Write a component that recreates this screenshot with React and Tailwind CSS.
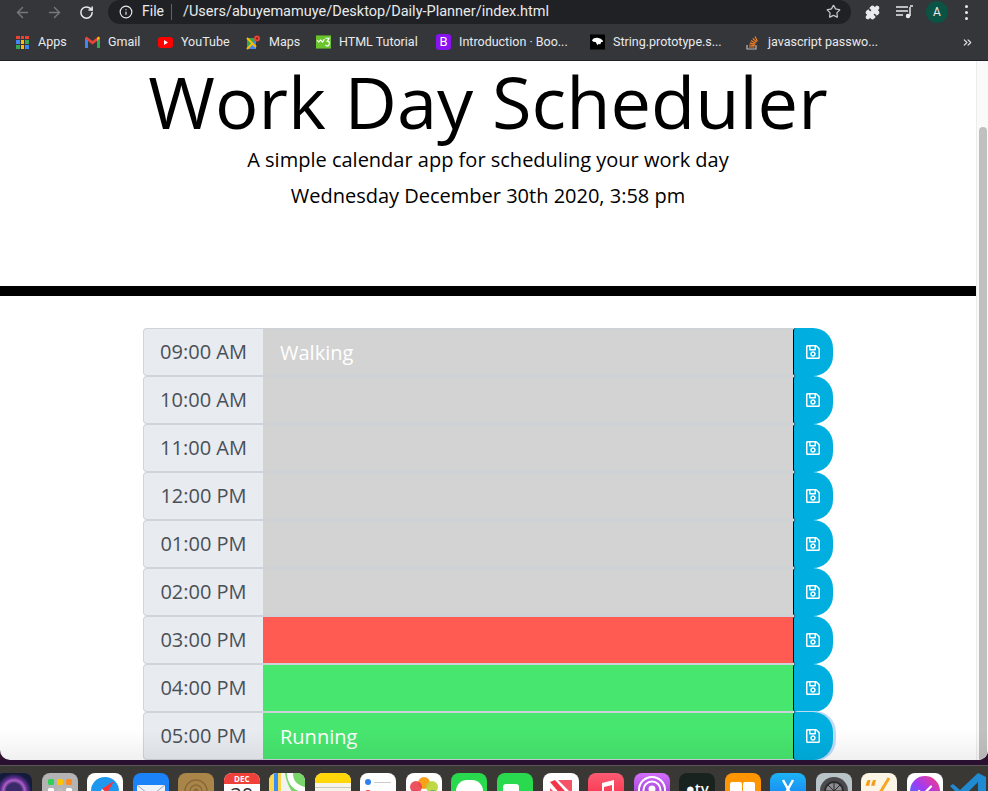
import React from "react";
import { ArrowLeft, ArrowRight, RotateCw, Info, Star, Puzzle, ChevronsRight, Check } from "lucide-react";
import { FaRegSave } from "react-icons/fa";

const rows = [
  ["09:00 AM", "Walking", "bg-[#d3d3d3]"],
  ["10:00 AM", "", "bg-[#d3d3d3]"],
  ["11:00 AM", "", "bg-[#d3d3d3]"],
  ["12:00 PM", "", "bg-[#d3d3d3]"],
  ["01:00 PM", "", "bg-[#d3d3d3]"],
  ["02:00 PM", "", "bg-[#d3d3d3]"],
  ["03:00 PM", "", "bg-[#ff5b52]"],
  ["04:00 PM", "", "bg-[#47e66f]"],
  ["05:00 PM", "Running", "bg-[#47e66f]"],
];

function AppsIcon() {
  const c = ["#ea4335","#ea4335","#ea4335","#4285f4","#fbbc04","#34a853","#34a853","#fbbc04","#4285f4"];
  return <div className="grid grid-cols-3 gap-px w-[13px] h-[13px]">{c.map((x, i) => <span key={i} style={{ background: x }} />)}</div>;
}
const GmailIcon = () => (
  <svg width="15" height="12" viewBox="0 0 15 12"><path d="M0 2v10h3V5l4.5 3.5L12 5v7h3V2l-1.5-1.5L7.5 5 1.5.5z" fill="#ea4335"/><path d="M0 2v10h3V5z" fill="#4285f4"/><path d="M12 5v7h3V2z" fill="#34a853"/><path d="M12 5l3-3-1.5-1.5L12 2z" fill="#fbbc04"/></svg>
);
const YtIcon = () => (
  <svg width="15" height="11" viewBox="0 0 15 11"><rect width="15" height="11" rx="3" fill="#f00"/><path d="M6 3l4 2.5L6 8z" fill="#fff"/></svg>
);
const MapsIcon = () => (
  <svg width="15" height="15" viewBox="0 0 15 15"><path d="M1 3h9v11H1z" fill="#34a853"/><path d="M1 14l9-9v9z" fill="#4285f4"/><path d="M1 3l9 9M1 14l5-5" stroke="#fbbc04" strokeWidth="2"/><circle cx="11" cy="3.5" r="3" fill="#ea4335"/><circle cx="11" cy="3.5" r="1" fill="#7a1712"/></svg>
);
const W3Icon = () => (
  <svg width="16" height="14" viewBox="0 0 16 14"><rect width="16" height="14" fill="#6ac42c"/><path d="M1 5l2 2 2-2 2 2 2-3M10 3h4l-2 3q3 0 2 3.500t-4 .5" stroke="#fff" strokeWidth="1.300" fill="none"/></svg>
);
const BsIcon = () => (
  <div className="w-4 h-4 rounded-[3px] bg-[#8a12f0] text-white text-[13px] leading-4 text-center">B</div>
);
const MdnIcon = () => (
  <svg width="16" height="16" viewBox="0 0 16 16"><rect width="16" height="16" fill="#000"/><path d="M2 6q2-3 6-2.500t6 3.500q0 1.500-2 1l-1 2.500-2-.5-1 1.500-2-3.500q-3 0-4-2z" fill="#fff"/></svg>
);
const SoIcon = () => (
  <svg width="13" height="15" viewBox="0 0 13 15"><path d="M1 10v4h9v-4" stroke="#bcbbbb" strokeWidth="1.200" fill="none"/><path d="M3 12h5.500M3.200 10l5.400.6M3.800 7.800l5.200 1.500M5 5.500l4.700 2.800M6.800 3.300l3.800 3.900M9 1.500l2.400 4.700" stroke="#f48024" strokeWidth="1.200"/></svg>
);

const bookmarks = [
  [<AppsIcon />, "Apps", "w-[70px]"],
  [<GmailIcon />, "Gmail", "w-[73px]"],
  [<YtIcon />, "YouTube", "w-[88px]"],
  [<MapsIcon />, "Maps", "w-[70px]"],
  [<W3Icon />, "HTML Tutorial", "w-[120px]"],
  [<BsIcon />, "Introduction · Boo...", "w-[154px]"],
  [<MdnIcon />, "String.prototype.s...", "w-[155px]"],
  [<SoIcon />, "javascript passwo...", "w-[140px]"],
];

function Dock() {
  const base = "w-[36px] h-[36px] rounded-[8px] shrink-0 overflow-hidden relative";
  return (
    <div className="h-[26px] bg-[#3a3834] border-t border-[#5a5754] flex gap-[9.55px] pt-[7px] overflow-hidden">
      <div className={`${base} -ml-[4px] bg-[radial-gradient(circle,#3a2a6a_30%,#b060c8_42%,#5d2f90_52%,#141a3c_68%)]`} />
      <div className={`${base} bg-[#b4b4b4]`}>
        <div className="grid grid-cols-3 gap-[3px] p-[6px]">
          {["#2fd158","#ffc400","#ff8a1f","#fff","#bbb","#fff","#ff2d55","#aaa","#ff2d55"].map((c, i) => <span key={i} className="h-[6px] rounded-[1.5px]" style={{ background: c }} />)}
        </div>
      </div>
      <div className={`${base} bg-white flex items-center justify-center`}>
        <svg width="30" height="30" viewBox="0 0 30 30"><circle cx="15" cy="15" r="14" fill="#1e97ee"/><path d="M24 5l-12 8 5 4z" fill="#f33"/><path d="M6 25l6-12 5 4z" fill="#fff"/></svg>
      </div>
      <div className={`${base} bg-[#1c82f7] flex items-start justify-center pt-[12px]`}>
        <svg width="28" height="22" viewBox="0 0 28 22"><rect width="28" height="22" fill="#eef3f8"/><path d="M0 0l14 11L28 0" stroke="#9aa8b8" fill="none"/></svg>
      </div>
      <div className={`${base} bg-[#a9854a] flex items-center justify-center`}>
        <svg width="26" height="26" viewBox="0 0 26 26"><circle cx="13" cy="13" r="11" fill="none" stroke="#8a6a38" strokeWidth="1.500"/><circle cx="13" cy="13" r="6" fill="none" stroke="#8a6a38" strokeWidth="1.500"/><circle cx="13" cy="13" r="2.500" fill="#8a6a38"/></svg>
      </div>
      <div className={`${base} bg-white`}>
        <div className="h-[11px] bg-[#f0403a] text-white text-[8px] leading-[11px] font-bold text-center">DEC</div>
        <div className="text-[#333] text-[20px] leading-[22px] text-center">30</div>
      </div>
      <div className={`${base} bg-[#f2f2ee]`}>
        <svg width="36" height="36" viewBox="0 0 36 36"><path d="M16 0h20v30C26 26 18 14 16 0z" fill="#79d66b"/><path d="M0 0h12v36H0z" fill="#fbd84b"/><path d="M5 0h4v36H5z" fill="#3a8cf5"/><path d="M24 0c0 8 4 12 12 14v6C24 18 18 10 18 0z" fill="#fff"/></svg>
      </div>
      <div className={`${base} bg-[#f6f4ea]`}><div className="h-[10px] bg-[#ffd60a]" /><div className="mt-[4px] h-px bg-[#c9c9c2]" /><div className="mt-[7px] h-px bg-[#c9c9c2]" /></div>
      <div className={`${base} bg-white px-[5px] pt-[6px] flex flex-col gap-[5px]`}>
        {["#2f80ed","#ff3b30","#ff9500"].map((c) => <div key={c} className="flex items-center gap-[3px]"><span className="w-[6px] h-[6px] rounded-full" style={{ background: c }} /><span className="flex-1 h-px bg-[#ccc]" /></div>)}
      </div>
      <div className={`${base} bg-white`}>
        <svg width="36" height="36" viewBox="0 0 36 36"><circle cx="18" cy="10" r="6" fill="#f9a01b"/><circle cx="26" cy="14" r="6" fill="#b8d433" opacity=".9"/><circle cx="27" cy="23" r="6" fill="#49b96b" opacity=".9"/><circle cx="18" cy="27" r="6" fill="#4aa3df" opacity=".9"/><circle cx="9" cy="23" r="6" fill="#8a5bc4" opacity=".9"/><circle cx="10" cy="14" r="6" fill="#ea3f4e" opacity=".9"/></svg>
      </div>
      <div className={`${base} bg-[#29d94e] flex justify-center pt-[7px]`}><div className="w-[27px] h-[22px] rounded-full bg-white" /></div>
      <div className={`${base} bg-[#29d94e] pl-[6px] pt-[11px]`}><div className="w-[16px] h-[14px] rounded-[3px] bg-white" /></div>
      <div className={`${base} bg-white`}>
        <svg width="36" height="36" viewBox="0 0 36 36"><path d="M7 9l5-2 17 19-5 3z" fill="#f2364a"/><path d="M15 7h14v14z" fill="#f2364a" opacity=".85"/><path d="M7 15l14 14H7z" fill="#f2364a" opacity=".85"/></svg>
      </div>
      <div className={`${base} bg-[linear-gradient(#fb5c74,#fa233b)]`}>
        <svg width="36" height="36" viewBox="0 0 36 36"><path d="M14 10l12-3v17a3 3 0 1 1-2-3V12l-8 2v13a3 3 0 1 1-2-3z" fill="#fff"/></svg>
      </div>
      <div className={`${base} bg-[linear-gradient(#d56efc,#832bc1)]`}>
        <svg width="36" height="36" viewBox="0 0 36 36"><circle cx="18" cy="17" r="13" fill="none" stroke="#fff" strokeWidth="2"/><circle cx="18" cy="17" r="8.500" fill="none" stroke="#fff" strokeWidth="2"/><circle cx="18" cy="16" r="3.500" fill="#fff"/></svg>
      </div>
      <div className={`${base} bg-[#18231f] text-white text-[15px] font-semibold text-center leading-[30px]`}>●tv</div>
      <div className={`${base} bg-[#ff9500] flex justify-center gap-[1px] pt-[9px]`}><span className="w-[12px] h-[20px] rounded-[2px] bg-white" /><span className="w-[12px] h-[20px] rounded-[2px] bg-white" /></div>
      <div className={`${base} bg-[linear-gradient(#1cb5f5,#1670f0)]`}>
        <svg width="36" height="36" viewBox="0 0 36 36"><path d="M13 7l11 20M23 7L12 27M8 24h20" stroke="#fff" strokeWidth="2.500"/></svg>
      </div>
      <div className={`${base} bg-[#b9c4c9] flex items-center justify-center`}>
        <svg width="32" height="32" viewBox="0 0 32 32"><circle cx="16" cy="16" r="14" fill="#4b4b4d"/><circle cx="16" cy="16" r="9" fill="#8c8c90" stroke="#2a2a2c" strokeWidth="2"/><path d="M16 7v18M7 16h18M10 10l12 12M22 10L10 22" stroke="#2a2a2c"/></svg>
      </div>
      <div className={`${base} bg-[#fdf6e6]`}>
        <div className="absolute left-[4px] top-[1px] text-[#f59a1b] text-[24px] leading-[28px] font-bold">“</div>
        <svg className="absolute inset-0" width="36" height="36" viewBox="0 0 36 36"><path d="M28 5L14 28" stroke="#f5a623" strokeWidth="3"/></svg>
      </div>
      <div className={`${base} bg-white flex items-center justify-center`}>
        <div className="w-[30px] h-[30px] rounded-full bg-[linear-gradient(45deg,#1e88ff,#a03bf5,#ff3a7a)] flex items-center justify-center"><Check size={18} color="#fff" strokeWidth={3} /></div>
      </div>
      <div className="w-[36px] h-[36px] shrink-0 -ml-[2px]">
        <svg width="40" height="36" viewBox="0 0 40 36"><path d="M28 0L10 17 3 11 0 13l8 8-8 8 3 2 7-6 18 17 8-4V4z" fill="#1f8ad2"/><path d="M28 9L16 21l12 10z" fill="#3a3834"/></svg>
      </div>
    </div>
  );
}

export default function App() {
  return (
    <div className="h-[791px] w-[988px] overflow-hidden flex flex-col bg-[#30102f] font-['Open_Sans',sans-serif]">
      <header className="h-[61px] shrink-0 bg-[#35363a] border-b border-[#202124] font-['Roboto',sans-serif] text-[#e8eaed]">
        <div className="h-[24px] flex items-center">
          <div className="w-[108px] shrink-0 flex items-center pl-[14px] gap-[15px]">
            <ArrowLeft size={17} color="#76787c" strokeWidth={2} />
            <ArrowRight size={17} color="#76787c" strokeWidth={2} />
            <RotateCw size={15} color="#e8eaed" strokeWidth={2.4} className="ml-[1px]" />
          </div>
          <div className="w-[743px] h-[24px] -mt-px bg-[#202124] rounded-[12px] flex items-center pl-[11px] pr-[10px] text-[14.5px]">
            <Info size={14} color="#e8eaed" />
            <span className="ml-[9px] text-[14px]">File</span>
            <span className="mx-[7px] w-px h-[16px] bg-[#5f6368]" />
            <span className="ml-[4px]">/Users/abuyemamuye/Desktop/Daily-Planner/index.html</span>
            <Star size={15} color="#c4c7c9" className="ml-auto" />
          </div>
          <div className="flex items-center pl-[14px]">
            <Puzzle size={15} fill="#e8eaed" color="#e8eaed" />
            <svg className="ml-[16px]" width="17" height="14" viewBox="0 0 17 14"><path d="M0 2h12M0 6h12M0 10h7" stroke="#e8eaed" strokeWidth="1.400"/><path d="M14 2v9" stroke="#e8eaed" strokeWidth="1.500"/><path d="M14 1h3" stroke="#e8eaed" strokeWidth="1.500"/><circle cx="12" cy="11" r="2.200" fill="#e8eaed"/></svg>
            <div className="ml-[13px] w-[22px] h-[22px] rounded-full bg-[#0b5345] text-[12px] text-center leading-[22px]">A</div>
            <div className="ml-[17px] flex flex-col gap-[3px]">
              <span className="w-[3px] h-[3px] rounded-full bg-[#e8eaed]" /><span className="w-[3px] h-[3px] rounded-full bg-[#e8eaed]" /><span className="w-[3px] h-[3px] rounded-full bg-[#e8eaed]" />
            </div>
          </div>
        </div>
        <div className="h-[36px] flex items-center pl-[15px] text-[12.5px]">
          {bookmarks.map(([icon, label, w]) => (
            <div key={label} className={`${w} shrink-0 flex items-center gap-[8px] whitespace-nowrap`}>
              <span className="w-[15px] flex justify-center shrink-0">{icon}</span>
              <span>{label}</span>
            </div>
          ))}
          <ChevronsRight size={13} color="#e8eaed" className="ml-[76px]" />
        </div>
      </header>

      <div className="h-[699px] shrink-0 flex bg-white rounded-b-[10px] overflow-hidden relative">
        <main className="w-[977px] shrink-0 overflow-hidden border-r border-[#ececec] text-black">
          <div className="text-center">
            <h1 className="text-[72.2px] leading-[86px] -mt-[3px]">Work Day Scheduler</h1>
            <p className="text-[20px] leading-[30px] mt-[1px]">A simple calendar app for scheduling your work day</p>
            <p className="text-[20px] leading-[30px] mt-[6px]">Wednesday December 30th 2020, 3:58 pm</p>
          </div>
          <div className="h-[10px] bg-black mt-[75px]" />
          <div className="w-[690px] mx-auto mt-[32px]">
            {rows.map(([time, text, bg], i) => (
              <div key={time} className="flex h-[48px]">
                <div className="w-[120px] shrink-0 bg-[#e8ebf0] border border-[#ced4da] border-r-0 rounded-l-[4px] text-[#495057] text-[20px] flex items-center justify-center">{time}</div>
                <div className={`flex-1 ${bg} border-b border-t border-[#cdd2d9] text-white text-[20px] pl-[17px] pt-[7px] leading-[34px]`}>{text}</div>
                <button className={`w-[40px] shrink-0 bg-[#00afdf] border-l border-black rounded-l-[3px] rounded-r-[20px] text-white flex items-center justify-center pr-[2px] ${i === 8 ? "shadow-[2px_0_0_1px_#bfdcf7]" : ""}`}>
                  <FaRegSave size={16} />
                </button>
              </div>
            ))}
          </div>
        </main>
        <aside className="w-[11px] shrink-0 bg-[#fafafa] pl-[2px] pt-[66px]">
          <div className="h-[640px] w-[8px] rounded-full bg-[#c0c0c0]" />
        </aside>
        <div className="absolute left-0 right-0 bottom-0 h-[30px] bg-[linear-gradient(transparent,rgba(0,0,0,0.06))] pointer-events-none" />
      </div>

      <div className="h-[5px] shrink-0 bg-[#2a1030]" />
      <Dock />
    </div>
  );
}
